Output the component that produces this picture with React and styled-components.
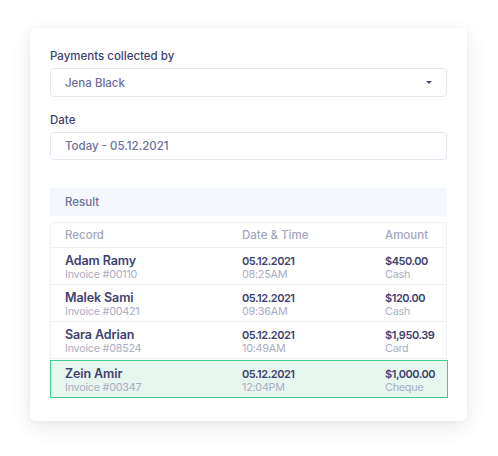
import React from "react";
import styled, { createGlobalStyle } from "styled-components";

const Global = createGlobalStyle`
  html, body { margin: 0; padding: 0; background: #ffffff; }
  body { font-family: Inter, "Noto Sans", sans-serif; -webkit-font-smoothing: antialiased; }
  * { box-sizing: border-box; }
`;

const Page = styled.div`
  width: 498px;
  height: 456px;
  padding: 28px 0 0 30px;
`;

const Card = styled.div`
  width: 437px;
  height: 393px;
  background: #fff;
  border-radius: 5px;
  box-shadow: 0 6px 22px rgba(30, 40, 70, 0.10), 0 1px 4px rgba(30, 40, 70, 0.05);
  padding: 20px 20px 0 20px;
  display: flex;
  flex-direction: column;
`;

const Label = styled.div`
  font-size: 11.5px;
  font-weight: 500;
  line-height: 16px;
  color: #3e4170;
  margin-top: ${(p) => p.$mt || 0}px;
  margin-bottom: 4px;
`;

const Field = styled.div`
  height: ${(p) => p.$h}px;
  border: 1px solid #e4e8f1;
  border-radius: 4px;
  display: flex;
  align-items: center;
  justify-content: space-between;
  padding: 0 14px 0 14px;
  font-size: 11.5px;
  font-weight: 500;
  color: #6c6f98;
`;

const Caret = styled.span`
  width: 0;
  height: 0;
  border-left: 3.5px solid transparent;
  border-right: 3.5px solid transparent;
  border-top: 3.5px solid #4a4d78;
`;

const ResultBar = styled.div`
  margin-top: 28px;
  height: 28px;
  background: #f4f7fb;
  display: flex;
  align-items: center;
  padding-left: 15px;
  font-size: 11.5px;
  font-weight: 500;
  color: #6c6f98;
`;

const Table = styled.div`
  margin-top: 6px;
  border: 1px solid #eef1f6;
  border-bottom: none;
  border-radius: 3px 3px 0 0;
  display: flex;
  flex-direction: column;
`;

const grid = `
  display: grid;
  grid-template-columns: 177px 143px 1fr;
  padding-left: 14px;
`;

const HeadRow = styled.div`
  ${grid}
  height: 25px;
  align-items: center;
  border-bottom: 1px solid #eef1f6;
  font-size: 11.5px;
  font-weight: 500;
  color: #a3a6bf;
`;

const Row = styled.div`
  ${grid}
  height: ${(p) => (p.$active ? 38 : 37)}px;
  align-items: center;
  background: ${(p) => (p.$active ? "#e7f6ee" : "#fff")};
  border-bottom: 1px solid #eef1f6;
  padding-top: 2px;
  ${(p) =>
    p.$active &&
    `
    border: 1.5px solid #43cb8f;
    margin: 1px -2px 0 -1px;
    padding-left: 14px;
  `}
`;

const Cell = styled.div`
  display: flex;
  flex-direction: column;
`;

const Primary = styled.span`
  font-size: ${(p) => (p.$small ? 11 : 12.5)}px;
  letter-spacing: ${(p) => (p.$small ? -0.45 : -0.1)}px;
  font-weight: 600;
  color: #3e4170;
  line-height: 14px;
`;

const Secondary = styled.span`
  font-size: 10.8px;
  letter-spacing: -0.25px;
  font-weight: 400;
  color: #aaadc4;
  line-height: 13px;
`;

const rows = [
  { name: "Adam Ramy", inv: "Invoice #00110", date: "05.12.2021", time: "08:25AM", amt: "$450.00", method: "Cash" },
  { name: "Malek Sami", inv: "Invoice #00421", date: "05.12.2021", time: "09:36AM", amt: "$120.00", method: "Cash" },
  { name: "Sara Adrian", inv: "Invoice #08524", date: "05.12.2021", time: "10:49AM", amt: "$1,950.39", method: "Card" },
  { name: "Zein Amir", inv: "Invoice #00347", date: "05.12.2021", time: "12:04PM", amt: "$1,000.00", method: "Cheque", active: true },
];

export default function App() {
  return (
    <Page>
      <Global />
      <Card>
        <Label>Payments collected by</Label>
        <Field $h={29}>
          <span>Jena Black</span>
          <Caret />
        </Field>
        <Label $mt={15}>Date</Label>
        <Field $h={28}>
          <span>Today - 05.12.2021</span>
        </Field>
        <ResultBar>Result</ResultBar>
        <Table>
          <HeadRow>
            <span>Record</span>
            <span>Date &amp; Time</span>
            <span>Amount</span>
          </HeadRow>
          {rows.map((r) => (
            <Row key={r.name} $active={r.active}>
              <Cell>
                <Primary>{r.name}</Primary>
                <Secondary>{r.inv}</Secondary>
              </Cell>
              <Cell>
                <Primary $small>{r.date}</Primary>
                <Secondary>{r.time}</Secondary>
              </Cell>
              <Cell>
                <Primary $small>{r.amt}</Primary>
                <Secondary>{r.method}</Secondary>
              </Cell>
            </Row>
          ))}
        </Table>
      </Card>
    </Page>
  );
}
